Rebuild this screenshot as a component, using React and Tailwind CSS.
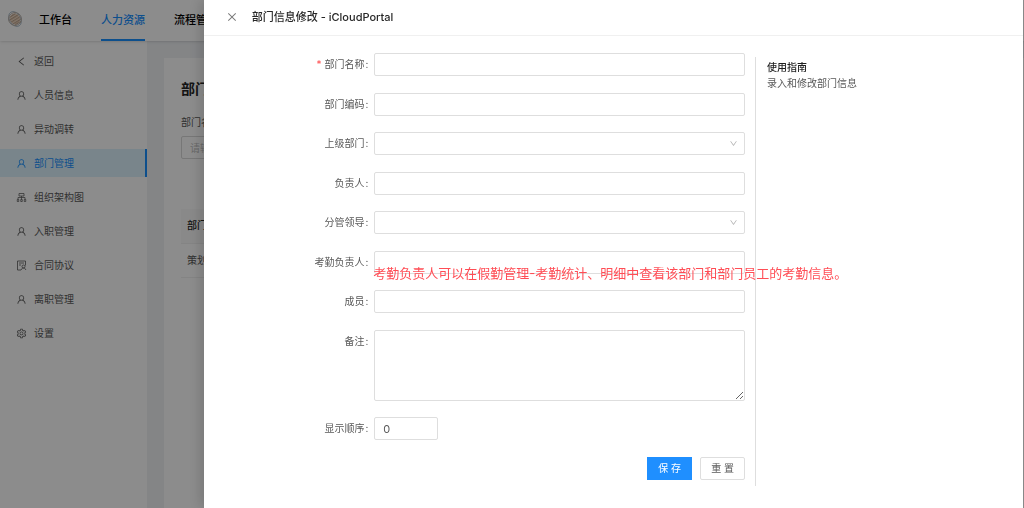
import { useState } from "react";
import {
  AiOutlineUser,
  AiOutlineLeft,
  AiOutlineSetting,
  AiOutlineClose,
  AiOutlineDown,
} from "react-icons/ai";

function OrgIcon() {
  return (
    <svg viewBox="0 0 22 22" className="w-[11px] h-[11px]" fill="none" stroke="currentColor" strokeWidth="1.5">
      <path d="M6 3h10v5H6zM11 8v7M4 15v-4h14v4" />
      <path d="M2.5 15h3v4h-3zM9.5 15h3v4h-3zM16.5 15h3v4h-3z" />
    </svg>
  );
}

function ContractIcon() {
  return (
    <svg viewBox="0 0 22 22" className="w-[11px] h-[11px]" fill="none" stroke="currentColor" strokeWidth="1.6">
      <path d="M10 20H3V2h16v9M6 6h10M6 10h4" />
      <circle cx="15" cy="13" r="3" />
      <path d="M10.500 20c.5-3 2-4 4.500-4s4 1 4.500 4" />
    </svg>
  );
}

function Logo() {
  return (
    <svg viewBox="0 0 32 36" className="w-4 h-[18px]" fill="none">
      <g transform="rotate(-32 16 18)">
        <ellipse cx="16" cy="18" rx="11" ry="16" stroke="#9fb0bf" strokeWidth="1.6" />
        <ellipse cx="16" cy="18" rx="13" ry="13" stroke="#b5aca4" strokeWidth="1.6" />
        <ellipse cx="16" cy="18" rx="10" ry="11" fill="#dcc0a8" />
      </g>
      <path d="M5 15l12-8M5 20l18-11M8 24l18-11M11 28l17-10M16 30l12-7" stroke="#a89684" strokeWidth="1.3" />
      <path d="M6 17l14-9M8 22l17-10M11 26l15-9" stroke="#f7e6d6" strokeWidth="1.3" />
    </svg>
  );
}

const menu = [
  { name: "返回", icon: <AiOutlineLeft /> },
  { name: "人员信息", icon: <AiOutlineUser /> },
  { name: "异动调转", icon: <AiOutlineUser /> },
  { name: "部门管理", icon: <AiOutlineUser />, active: true },
  { name: "组织架构图", icon: <OrgIcon /> },
  { name: "入职管理", icon: <AiOutlineUser /> },
  { name: "合同协议", icon: <ContractIcon /> },
  { name: "离职管理", icon: <AiOutlineUser /> },
  { name: "设置", icon: <AiOutlineSetting /> },
];

const fields = [
  { id: "name", label: "部门名称", type: "text", required: true },
  { id: "code", label: "部门编码", type: "text" },
  { id: "parent", label: "上级部门", type: "select" },
  { id: "owner", label: "负责人", type: "text" },
  { id: "leader", label: "分管领导", type: "select" },
  {
    id: "attendance",
    label: "考勤负责人",
    type: "text",
    note: "考勤负责人可以在假勤管理-考勤统计、明细中查看该部门和部门员工的考勤信息。",
  },
  { id: "members", label: "成员", type: "text" },
  { id: "remark", label: "备注", type: "textarea" },
  { id: "order", label: "显示顺序", type: "number" },
];

const emptyForm = {
  name: "",
  code: "",
  parent: "",
  owner: "",
  leader: "",
  attendance: "",
  members: "",
  remark: "",
  order: "0",
};

const box = "block w-full h-[23px] px-2 border border-[#dedede] rounded-xs bg-white outline-none";

function Field({ field, value, onChange }) {
  const props = { id: field.id, name: field.id, value, onChange };

  return (
    <div className="grid grid-cols-[5fr_12fr]">
      <label htmlFor={field.id} className="h-[23px] leading-[23px] pr-[6px] text-right">
        {field.required && <span className="mr-[3px] text-[#ff4d4f]">*</span>}
        {field.label}
        <span className="ml-px">:</span>
      </label>
      <div className="relative">
        {field.type === "text" && <input type="text" className={box} {...props} />}
        {field.type === "number" && (
          <div className="w-16">
            <input type="text" inputMode="numeric" className={box + " text-[11px]"} {...props} />
          </div>
        )}
        {field.type === "select" && (
          <>
            <select className={box + " appearance-none"} {...props}>
              <option value=""></option>
            </select>
            <AiOutlineDown className="absolute right-[7px] top-[7px] w-[9px] h-[9px] text-[#b0b0b0] pointer-events-none" />
          </>
        )}
        {field.type === "textarea" && (
          <textarea
            className="block w-full h-[71px] px-2 py-1 border border-[#dedede] rounded-xs outline-none resize-y"
            {...props}
          />
        )}
        {field.note && (
          <p className="absolute -left-px top-3 text-[13px] leading-5 whitespace-nowrap text-[#ff4d55]">
            {field.note}
          </p>
        )}
      </div>
    </div>
  );
}

export default function App() {
  const [form, setForm] = useState(emptyForm);

  const handleChange = (e) => {
    setForm({ ...form, [e.target.name]: e.target.value });
  };

  const handleSubmit = (e) => {
    e.preventDefault();
  };

  return (
    <div className="h-screen overflow-hidden flex flex-col bg-[#f0f2f5] font-['Inter','Noto_Sans_CJK_SC',sans-serif] text-[10px] text-[#595959]">
      <header className="relative h-[41px] shrink-0 flex items-center bg-white shadow-sm">
        <div className="w-[39px] pl-[7px] pb-1">
          <Logo />
        </div>
        <nav className="h-full flex gap-[29px] text-[11px] font-medium text-black whitespace-nowrap">
          <a href="#" className="flex items-center">工作台</a>
          <a href="#" className="flex items-center text-[#1890ff] border-b-2 border-[#1890ff] pt-[2px]">人力资源</a>
          <a href="#" className="flex items-center">流程管理</a>
        </nav>
      </header>

      <div className="flex-1 flex min-h-0">
        <aside className="w-[147px] shrink-0 pt-[6px] bg-white">
          <ul className="flex flex-col gap-[6px]">
            {menu.map((item) => (
              <li key={item.name}>
                <a
                  href="#"
                  className={
                    item.active
                      ? "h-7 pl-4 flex items-center gap-[7px] bg-[#dcf3fd] text-[#1890ff] border-r-2 border-[#1890ff]"
                      : "h-7 pl-4 flex items-center gap-[7px]"
                  }
                >
                  <span className="text-[11px]">{item.icon}</span>
                  {item.name}
                </a>
              </li>
            ))}
          </ul>
        </aside>

        <main className="flex-1 mt-[17px] ml-[17px] px-[17px] pt-[19px] bg-white">
          <h1 className="text-[14px] leading-6 font-bold text-[#262626]">部门管理</h1>
          <label htmlFor="search" className="block mt-[13px] leading-4">部门名称</label>
          <input
            id="search"
            placeholder="请输入"
            className="mt-[6px] block w-40 h-[23px] px-2 border border-[#d9d9d9] rounded-xs placeholder:text-[#bfbfbf]"
          />
          <table className="mt-[50px] w-full text-left">
            <thead>
              <tr className="h-[34px] bg-[#fafafa] border-b border-[#f0f0f0] text-[#262626]">
                <th className="px-[6px] font-medium">部门名称</th>
              </tr>
            </thead>
            <tbody>
              <tr className="h-[34px] border-b border-[#f0f0f0]">
                <td className="px-[6px]">策划部</td>
              </tr>
            </tbody>
          </table>
        </main>
      </div>

      <div className="fixed inset-0 bg-black/45" />

      <section
        role="dialog"
        aria-labelledby="drawer-title"
        className="fixed inset-y-0 right-px w-4/5 flex flex-col bg-white shadow-[-4px_0_12px_rgba(0,0,0,0.15)]"
      >
        <div className="h-9 shrink-0 px-[22px] pb-[2px] flex items-center gap-[14px] border-b border-[#f0f0f0]">
          <button type="button" aria-label="关闭" className="text-[12px] text-[#7a7a7a]">
            <AiOutlineClose />
          </button>
          <h2 id="drawer-title" className="text-[11px] leading-4 font-medium text-[#262626]">
            部门信息修改 - iCloudPortal
          </h2>
        </div>

        <div className="px-4 pt-[17px] flex">
          <form onSubmit={handleSubmit} className="w-[68%] pr-[10px] min-h-[427px] flex flex-col justify-between">
            {fields.map((field) => (
              <Field key={field.id} field={field} value={form[field.id]} onChange={handleChange} />
            ))}
            <div className="flex justify-end gap-2">
              <button type="submit" className="h-[23px] w-[45px] bg-[#1f8fff] text-white">
                保 存
              </button>
              <button
                type="button"
                onClick={() => setForm(emptyForm)}
                className="h-[23px] w-[45px] rounded-xs border border-[#dedede]"
              >
                重 置
              </button>
            </div>
          </form>
          <div className="flex-1 mt-1 -mb-[6px] pl-[11px] pt-[2px] border-l border-[#dedede] leading-4">
            <h3 className="font-medium text-[#1f1f1f]">使用指南</h3>
            <p>录入和修改部门信息</p>
          </div>
        </div>
      </section>
    </div>
  );
}
